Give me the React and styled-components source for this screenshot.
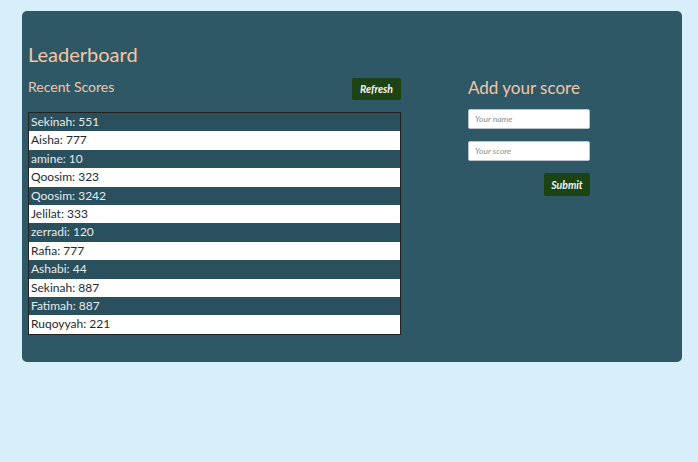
import React from "react";
import styled, { createGlobalStyle } from "styled-components";

const GlobalStyle = createGlobalStyle`
  body {
    margin: 0;
    background: #d7eefb;
    font-family: Lato, "Open Sans", sans-serif;
  }
`;

const Page = styled.div`
  padding: 11px 16px 0 22px;
`;

const Card = styled.div`
  width: 660px;
  box-sizing: border-box;
  background: #2e5866;
  border-radius: 5px;
  padding: 31px 6px 27px;
`;

const Title = styled.h1`
  margin: 0 0 12px;
  font-size: 20px;
  line-height: 24px;
  font-weight: 400;
  color: #f3c6a6;
`;

const Columns = styled.div`
  display: flex;
  align-items: flex-start;
  gap: 67px;
`;

const LeftCol = styled.div`
  width: 373px;
`;

const HeadRow = styled.div`
  display: flex;
  justify-content: space-between;
  align-items: flex-start;
  height: 22px;
  margin-bottom: 12px;
`;

const SubTitle = styled.h2`
  margin: 0;
  font-size: 14px;
  line-height: 18px;
  font-weight: 400;
  color: #f3c6a6;
`;

const Button = styled.button`
  background: #1c4314;
  color: #f4f4f4;
  border: none;
  border-radius: 2px;
  font-family: inherit;
  font-size: 10.5px;
  font-weight: 700;
  font-style: italic;
  padding: 0;
  width: ${(p) => p.$w}px;
  height: ${(p) => p.$h}px;
  cursor: pointer;
`;

const List = styled.ul`
  list-style: none;
  margin: 0;
  padding: 0;
  border: 1px solid #222;
`;

const Row = styled.li`
  height: 18.42px;
  line-height: 18.42px;
  padding-left: 2px;
  font-size: 12px;
  background: ${(p) => (p.$dark ? "#2a4f5d" : "#ffffff")};
  color: ${(p) => (p.$dark ? "#e6ecee" : "#1d2a30")};
`;

const RightCol = styled.form`
  width: 122px;
  display: flex;
  flex-direction: column;
  align-items: flex-end;
`;

const FormTitle = styled.h2`
  align-self: flex-start;
  margin: 0 0 11px;
  font-size: 17px;
  line-height: 20px;
  font-weight: 400;
  white-space: nowrap;
  color: #f3c6a6;
`;

const Input = styled.input`
  width: 122px;
  height: 20px;
  box-sizing: border-box;
  border: 1px solid #b8c4cc;
  border-radius: 2px;
  padding: 0 6px;
  margin-bottom: 12px;
  font-family: inherit;
  font-size: 8.5px;
  font-style: italic;
  &::placeholder {
    color: #8a8f94;
  }
`;

const scores = [
  ["Sekinah", 551],
  ["Aisha", 777],
  ["amine", 10],
  ["Qoosim", 323],
  ["Qoosim", 3242],
  ["Jelilat", 333],
  ["zerradi", 120],
  ["Rafia", 777],
  ["Ashabi", 44],
  ["Sekinah", 887],
  ["Fatimah", 887],
  ["Ruqoyyah", 221],
];

export default function App() {
  return (
    <>
      <GlobalStyle />
      <Page>
        <Card>
          <Title>Leaderboard</Title>
          <Columns>
            <LeftCol>
              <HeadRow>
                <SubTitle>Recent Scores</SubTitle>
                <Button type="button" $w={49} $h={22}>
                  Refresh
                </Button>
              </HeadRow>
              <List>
                {scores.map(([name, score], i) => (
                  <Row key={i} $dark={i % 2 === 0}>
                    {name}: {score}
                  </Row>
                ))}
              </List>
            </LeftCol>
            <RightCol onSubmit={(e) => e.preventDefault()}>
              <FormTitle>Add your score</FormTitle>
              <Input type="text" placeholder="Your name" />
              <Input type="text" placeholder="Your score" />
              <Button type="submit" $w={46} $h={23}>
                Submit
              </Button>
            </RightCol>
          </Columns>
        </Card>
      </Page>
    </>
  );
}
